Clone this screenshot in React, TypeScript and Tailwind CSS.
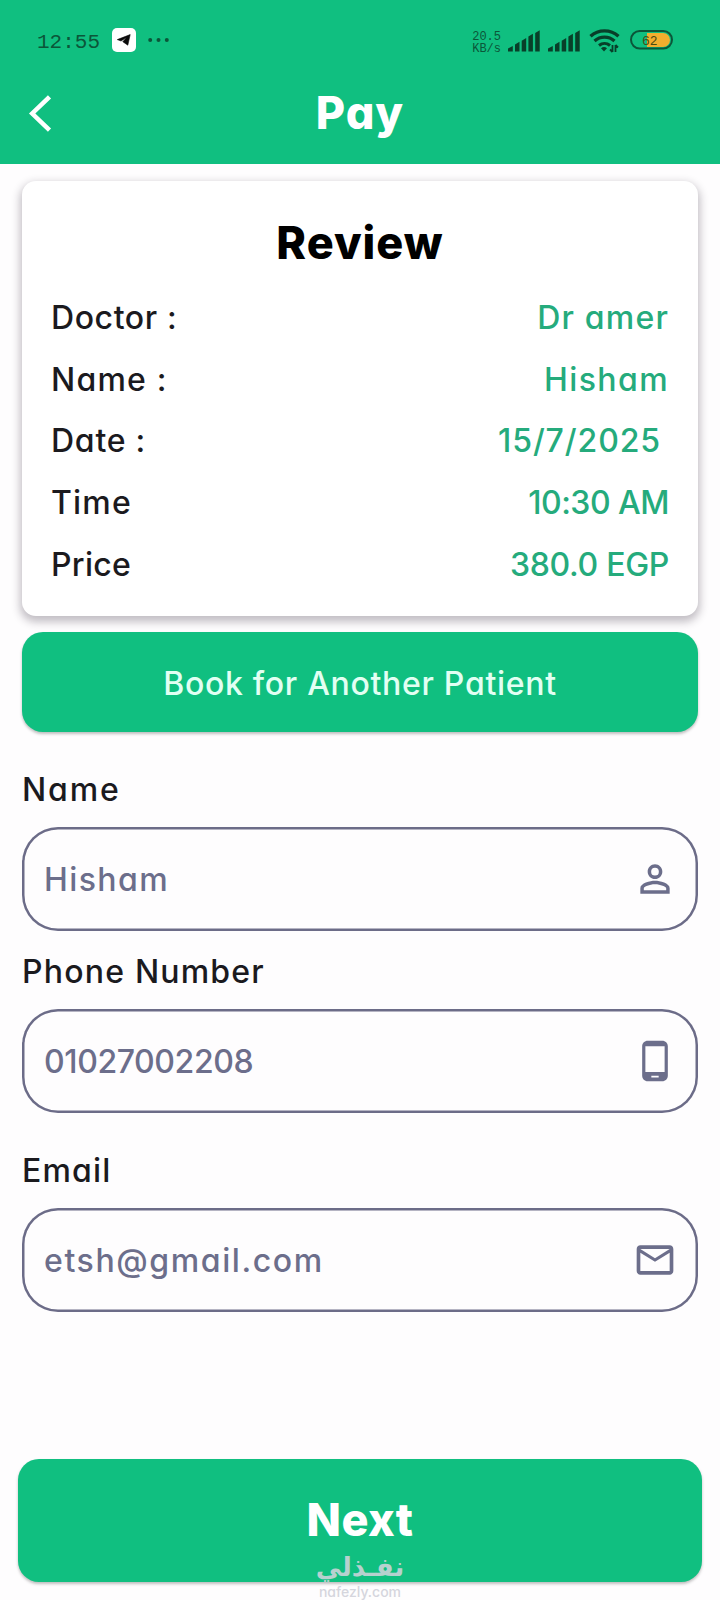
import React, { useState } from 'react';
import { MdMailOutline, MdPersonOutline, MdPhoneAndroid } from 'react-icons/md';

interface ReviewRow {
  label: string;
  value: string;
  labelClass: string;
  valueClass: string;
}

const reviewRows: ReviewRow[] = [
  { label: 'Doctor :', value: 'Dr amer', labelClass: 'tracking-[0.6px]', valueClass: 'tracking-[1.2px]' },
  { label: 'Name :', value: 'Hisham', labelClass: 'tracking-[1.2px]', valueClass: 'tracking-[1.4px]' },
  { label: 'Date :', value: '15/7/2025', labelClass: 'tracking-[0.75px]', valueClass: 'tracking-[0.9px] mr-2' },
  { label: 'Time', value: '10:30 AM', labelClass: 'tracking-[1.2px]', valueClass: 'tracking-[-0.5px]' },
  { label: 'Price', value: '380.0 EGP', labelClass: 'tracking-[0.3px]', valueClass: 'tracking-[-0.3px]' },
];

function SignalBars() {
  return (
    <svg width="33" height="22" viewBox="0 0 33 22" fill="#083f29">
      <path d="M0 18.5 4.8 16v5.500H0zM7 14.500l4.500-2.700V21.500H7zM13.700 10.700l4.500-2.700V21.500h-4.500zM20.400 6.500l4.500-2.700V21.500h-4.500zM27.200 3l4.500-2.700V21.500h-4.500z" />
    </svg>
  );
}

function StatusBar() {
  return (
    <div className="flex h-[80px] items-center pl-[37px] pr-[47px] font-['Liberation_Mono',monospace] text-[#0b5639]">
      <span className="pt-[4px] text-[21px] leading-none">12:55</span>
      <div className="ml-[12px] flex h-6 w-6 items-center justify-center rounded-[5px] bg-white">
        <svg width="14" height="12" viewBox="0 0 14 12">
          <path d="M13.200 0.600 0.300 5.600 4 7 9.500 3.500 5.800 7.700 10.800 11.200z" fill="#0a0a0a" stroke="#0a0a0a" strokeWidth="0.600" />
        </svg>
      </div>
      <svg className="ml-[12px]" width="22" height="6" viewBox="0 0 22 6" fill="#0b5639">
        <circle cx="2.200" cy="3" r="2" />
        <circle cx="10.500" cy="3" r="2" />
        <circle cx="18.800" cy="3" r="2" />
      </svg>
      <div className="ml-auto pt-[6px] text-[12px] leading-[12px]">
        <div>20.5</div>
        <div>KB/s</div>
      </div>
      <div className="ml-[7px] flex items-center gap-[7px] pt-px">
        <SignalBars />
        <SignalBars />
      </div>
      <svg className="ml-[8px]" width="31" height="25" viewBox="0 0 31 25" fill="none" stroke="#083f29">
        <path d="M1.500 8.300c8-7.200 20-7.200 28 0" strokeWidth="3.400" />
        <path d="M5.500 13c5.800-5.200 14.200-5.200 20 0" strokeWidth="3.200" />
        <path d="M10 17.500c3.200-2.700 7.800-2.700 11 0" strokeWidth="3" />
        <path d="M12 20.200c2-1.600 4-1.600 6 0l-3 3.300z" fill="#083f29" stroke="none" />
        <path d="M23.500 17v7M26.500 17v7M21 21.500l2.500 2.500M29 19.500 26.500 17" strokeWidth="1.800" />
      </svg>
      <svg className="ml-[10px]" width="43" height="20" viewBox="0 0 43 20">
        <rect x="1" y="1" width="41" height="18" rx="9" fill="#10bf80" />
        <path d="M17 3h16a7 7 0 0 1 0 14H17z" fill="#f2ae2e" />
        <rect x="1" y="1" width="41" height="17.500" rx="8.750" fill="none" stroke="#0b5639" strokeWidth="2" />
        <text x="12" y="14.500" fontSize="13" fill="#4b4a12" fontFamily="Liberation Mono, monospace">62</text>
      </svg>
    </div>
  );
}

interface FieldProps {
  label: string;
  value: string;
  labelClass: string;
  inputClass: string;
  icon: React.ReactNode;
  onChange: (value: string) => void;
}

function Field({ label, value, labelClass, inputClass, icon, onChange }: FieldProps) {
  return (
    <label className="block">
      <span className={`block h-12 pt-px text-[32px] leading-[48px] font-medium text-[#1b1a1e] ${labelClass}`}>{label}</span>
      <div className="mt-[14px] flex h-[104px] items-center rounded-[36px] pr-[21px] pl-[22px] shadow-[inset_0_0_0_2.5px_#6c6c88]">
        <input
          type="text"
          value={value}
          onChange={(e) => onChange(e.target.value)}
          className={`min-w-0 flex-1 bg-transparent pt-[2px] text-[32px] leading-[48px] font-medium text-[#6c6e8b] outline-none ${inputClass}`}
        />
        <span className="text-[44px] text-[#6c6e8b]">{icon}</span>
      </div>
    </label>
  );
}

export default function App() {
  const [formData, setFormData] = useState({
    name: 'Hisham',
    phone: '01027002208',
    email: 'etsh@gmail.com',
  });

  return (
    <div className="relative flex h-[1600px] w-[720px] flex-col overflow-hidden bg-[#fefdfe] font-[Inter,sans-serif] [font-feature-settings:'cv11']">
      <header className="h-[164px] shrink-0 bg-[#10bf80]">
        <StatusBar />
        <div className="grid h-[67px] grid-cols-[120px_1fr_120px] items-center">
          <button type="button" aria-label="Back" className="pl-[28px]">
            <svg width="26" height="38" viewBox="0 0 26 38" fill="none" stroke="white" strokeWidth="4.500">
              <path d="M21.500 1.800 4.200 18.500l17.300 16.700" />
            </svg>
          </button>
          <h1 className="pb-[3px] text-center text-[45px] leading-[63px] font-extrabold tracking-[1px] text-white">Pay</h1>
        </div>
      </header>

      <main className="flex flex-col px-[22px] pt-[17px]">
        <section className="h-[435px] rounded-[14px] bg-white px-[29px] pt-[37px] shadow-[0_4px_9px_2px_rgba(40,30,45,0.28)]">
          <h2 className="h-[50px] text-center text-[45px] leading-[50px] font-extrabold tracking-[1px] text-black">Review</h2>
          <dl className="mt-[19px] text-[32px] font-medium">
            {reviewRows.map((row) => (
              <div key={row.label} className="flex h-[61.8px] items-center justify-between">
                <dt className={`text-[#1b1a1e] ${row.labelClass}`}>{row.label}</dt>
                <dd className={`text-[#25ab7c] ${row.valueClass}`}>{row.value}</dd>
              </div>
            ))}
          </dl>
        </section>

        <button
          type="button"
          className="mt-[16px] h-[100px] rounded-[21px] bg-[#10bf80] pt-[4px] text-[32px] font-medium tracking-[0.7px] text-[#e2fff3] shadow-[0_2px_3px_rgba(0,0,0,0.25)]"
        >
          Book for Another Patient
        </button>

        <form className="pt-[33px]">
          <Field
            label="Name"
            value={formData.name}
            labelClass="tracking-[1.9px]"
            inputClass="tracking-[1.4px]"
            icon={<MdPersonOutline />}
            onChange={(name) => setFormData({ ...formData, name })}
          />
          <div className="h-4" />
          <Field
            label="Phone Number"
            value={formData.phone}
            labelClass="tracking-[1.2px]"
            inputClass="tracking-[-0.4px]"
            icon={<MdPhoneAndroid />}
            onChange={(phone) => setFormData({ ...formData, phone })}
          />
          <div className="h-[33px]" />
          <Field
            label="Email"
            value={formData.email}
            labelClass="tracking-[1.2px]"
            inputClass="tracking-[1.6px]"
            icon={<MdMailOutline />}
            onChange={(email) => setFormData({ ...formData, email })}
          />
        </form>
      </main>

      <button
        type="button"
        className="mx-[18px] mt-[147px] h-[123px] shrink-0 rounded-[21px] bg-[#10bf80] pb-[2px] text-[45px] font-extrabold tracking-[0.5px] text-white shadow-[0_2px_3px_rgba(0,0,0,0.25)]"
      >
        Next
      </button>

      <div className="pointer-events-none absolute bottom-0 left-[300px] w-[120px] text-center text-[#d5d5dd]">
        <div dir="rtl" className="font-['DejaVu_Sans',sans-serif] text-[26px] leading-[34px] font-bold opacity-85">
          نفـذلي
        </div>
        <div className="pb-px text-[14px] leading-[15px] font-medium">nafezly.com</div>
      </div>
    </div>
  );
}
